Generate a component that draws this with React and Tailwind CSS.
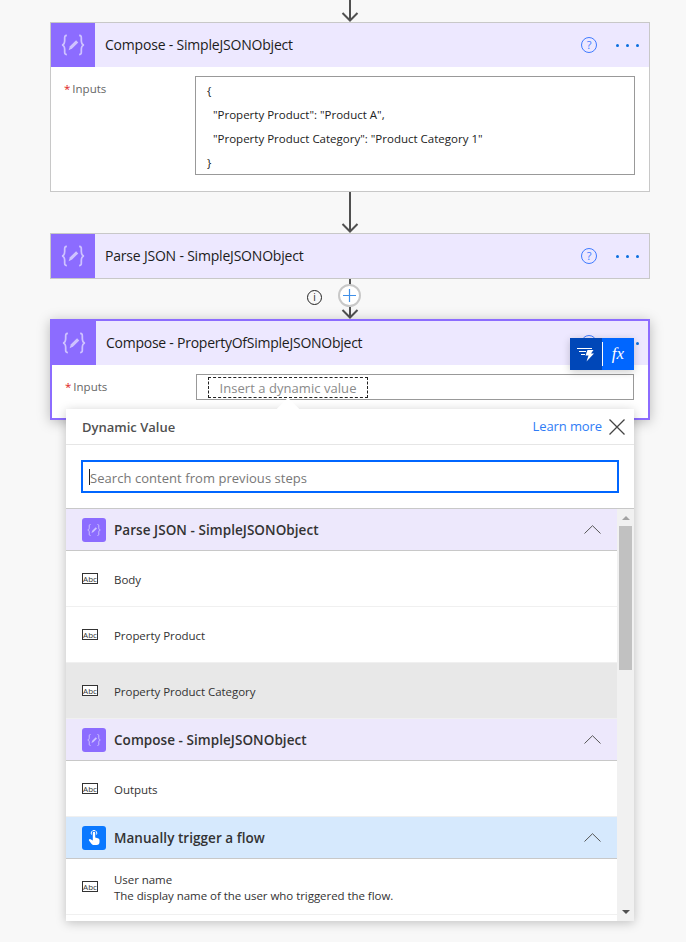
const font = "font-['Open_Sans','Noto_Sans',sans-serif]";

const BraceIcon = ({ className }) => (
  <svg viewBox="0 0 32 32" className={className} fill="none" stroke="currentColor" strokeWidth="2">
    <path d="M9 5C6 5 6.500 7 6.500 10.500C6.500 14 6 15.500 3.500 16C6 16.500 6.500 18 6.500 21.500C6.500 25 6 27 9 27" />
    <path d="M23 5C26 5 25.500 7 25.500 10.500C25.500 14 26 15.500 28.500 16C26 16.500 25.500 18 25.500 21.500C25.500 25 26 27 23 27" />
    <path d="M11 22L12.500 17.500L19.500 10.500L22 13L15 20Z" fill="currentColor" stroke="none" />
  </svg>
);

const Arrow = ({ h }) => (
  <svg width="20" height={h} viewBox={`0 0 20 ${h}`} fill="none" stroke="#505050" strokeWidth="2" className="block">
    <path d={`M10 0V${h - 1}M2.500 ${h - 9}L10 ${h - 1.500}L17.500 ${h - 9}`} />
  </svg>
);

const Help = () => (
  <div className="w-[16px] h-[16px] rounded-full border border-[#3f7bff] text-[#3f7bff] text-[11px] leading-[14px] text-center">?</div>
);

const Dots = () => (
  <div className="flex gap-[7px] ml-[19px]">
    <span className="w-[3px] h-[3px] rounded-full bg-[#0a6fe0]"></span>
    <span className="w-[3px] h-[3px] rounded-full bg-[#0a6fe0]"></span>
    <span className="w-[3px] h-[3px] rounded-full bg-[#0a6fe0]"></span>
  </div>
);

const CardHeader = ({ title }) => (
  <div className="flex items-center h-[44px] bg-[#ede8ff]">
    <div className="w-[44px] h-[44px] bg-[#8c6cff] flex items-center justify-center shrink-0">
      <BraceIcon className="w-[28px] h-[28px] text-[#cfc3ff]" />
    </div>
    <div className="ml-[10px] pb-[2px] text-[14px] text-[#1c1c1c] tracking-[-0.2px] flex-1">{title}</div>
    <Help />
    <Dots />
    <div className="w-[10px]"></div>
  </div>
);

const Abc = () => (
  <div className="w-[16px] h-[11px] border border-[#333] text-[8px] leading-[9px] text-center text-[#333] bg-white">Abc</div>
);

const Chevron = () => (
  <svg width="17" height="9" viewBox="0 0 17 9" fill="none" stroke="#555" strokeWidth="1">
    <path d="M0.500 8.500L8.500 0.700L16.500 8.500" />
  </svg>
);

const SectionHeader = ({ title, blue }) => (
  <div className={`flex items-center h-[42px] pl-[16px] pr-[16px] border-b border-[#c8c8c8] ${blue ? "bg-[#d6e9fd]" : "bg-[#ede8fc]"}`}>
    <div className={`w-[24px] h-[24px] rounded-[3px] flex items-center justify-center ${blue ? "bg-[#0a78ff]" : "bg-[#8c6cff]"}`}>
      {blue ? (
        <svg viewBox="0 0 16 16" className="w-[16px] h-[16px]" fill="white">
          <path d="M6.800 3a1.200 1.200 0 0 1 2.400 0V7.500l2.600.8c1 .4 1.700 1 1.700 2v1.700c0 2-1 3-3 3H8c-1.500 0-2.200-.6-3-1.800l-2-2.800c-.5-.8.500-1.800 1.500-1.200l2.300 1.300Z" />
          <path d="M5.500 4.500a2.800 2.800 0 1 1 5 0" fill="none" stroke="white" strokeWidth="1" />
        </svg>
      ) : (
        <BraceIcon className="w-[16px] h-[16px] text-[#cfc3ff]" />
      )}
    </div>
    <div className="ml-[8px] pt-[1px] flex-1 text-[13.500px] font-semibold text-[#333] tracking-[0.05px]">{title}</div>
    <Chevron />
  </div>
);

const Row = ({ label, sub, active }) => (
  <div className={`flex items-center h-[56px] pl-[16px] border-b border-[#f0f0f0] ${active ? "bg-[#e8e8e8]" : "bg-white"}`}>
    <Abc />
    <div className="ml-[16px] pt-[3px] text-[11.500px] leading-[16px] text-[#333] tracking-[-0.05px]">
      <div>{label}</div>
      {sub && <div>{sub}</div>}
    </div>
  </div>
);

const DynamicPanel = () => (
  <div className="absolute left-[14px] top-[88px] w-[568px] h-[512px] bg-white shadow-[0_2px_10px_rgba(0,0,0,0.22)] flex flex-col">
    <div className="absolute left-[214px] top-[-8px] w-[16px] h-[16px] bg-white rotate-45"></div>
    <div className="relative flex items-center h-[36px] pl-[16px] pr-[8px] border-b border-[#e6e6e6]">
      <div className="flex-1 pt-[3px] text-[13px] font-semibold text-[#505050]">Dynamic Value</div>
      <div className="pt-[1px] text-[13px] text-[#2f7cf6] tracking-[-0.1px]">Learn more</div>
      <svg width="18" height="18" viewBox="0 0 18 18" fill="none" stroke="#444" strokeWidth="1.300" className="ml-[6px]">
        <path d="M1.500 1.500L16.500 16.500M16.500 1.500L1.500 16.500" />
      </svg>
    </div>
    <div className="h-[64px] pl-[15px] pr-[15px] pt-[15px] border-b border-[#c8c8c8]">
      <div className="h-[33px] border-2 border-[#0066ff] flex items-center pl-[6px] text-[13px] text-[#777] tracking-[0.05px]">
        <span className="w-[1px] h-[16px] bg-[#222]"></span>
        <span className="pt-[4px]">Search content from previous steps</span>
      </div>
    </div>
    <div className="flex flex-1 min-h-0">
      <div className="flex-1 overflow-hidden">
        <SectionHeader title="Parse JSON - SimpleJSONObject" />
        <Row label="Body" />
        <Row label="Property Product" />
        <Row label="Property Product Category" active />
        <SectionHeader title="Compose - SimpleJSONObject" />
        <Row label="Outputs" />
        <SectionHeader title="Manually trigger a flow" blue />
        <Row label="User name" sub="The display name of the user who triggered the flow." />
      </div>
      <div className="w-[17px] bg-[#f1f1f1] flex flex-col items-center pt-[7px] pb-[7px]">
        <div className="w-0 h-0 border-x-[4px] border-x-transparent border-b-[4px] border-b-[#a3a3a3]"></div>
        <div className="w-[13px] h-[144px] bg-[#c1c1c1] mt-[6px]"></div>
        <div className="flex-1"></div>
        <div className="w-0 h-0 border-x-[4px] border-x-transparent border-t-[4px] border-t-[#505050]"></div>
      </div>
    </div>
  </div>
);

const App = () => {
  return (
    <div className={`${font} w-[686px] h-[942px] overflow-hidden bg-[#f8f8f8] relative`}>
      <div className="w-[600px] ml-[50px] flex flex-col">
        <div className="h-[22px] flex justify-center"><Arrow h={22} /></div>

        <div className="border border-[#c8c8c8] bg-white h-[170px]">
          <CardHeader title="Compose - SimpleJSONObject" />
          <div className="flex pt-[9px]">
            <div className="w-[144px] pl-[13px] pt-[5px] text-[11.500px] text-[#666] leading-[16px]">
              <span className="text-[#e02020]">*</span><span className="ml-[2px]">Inputs</span>
            </div>
            <div className="w-[440px] h-[99px] border border-[#999] pl-[11px] pt-[2px] text-[11.500px] leading-[24px] text-[#222]">
              <div>{"{"}</div>
              <div className="pl-[6px]">"Property Product": "Product A",</div>
              <div className="pl-[6px]">"Property Product Category": "Product Category 1"</div>
              <div>{"}"}</div>
            </div>
          </div>
        </div>

        <div className="h-[41px] flex justify-center"><Arrow h={41} /></div>

        <div className="border border-[#c8c8c8] h-[46px] bg-[#ede8ff]">
          <CardHeader title="Parse JSON - SimpleJSONObject" />
        </div>

        <div className="h-[40px] relative flex justify-center">
          <div className="w-[2px] h-[8px] bg-[#505050]"></div>
          <div className="absolute left-[257px] top-[11px] w-[15px] h-[15px] rounded-full border border-[#222] text-[10px] leading-[13px] text-center text-[#222]">i</div>
          <div className="absolute left-[288px] top-[5px] w-[23px] h-[23px] rounded-full border-2 border-[#c8c8c8] bg-white flex items-center justify-center">
            <svg width="13" height="13" viewBox="0 0 13 13" stroke="#3f8fe8" strokeWidth="1.200"><path d="M6.500 0V13M0 6.500H13" /></svg>
          </div>
          <div className="absolute left-[290px] top-[28px]"><Arrow h={12} /></div>
        </div>

        <div className="relative border-2 border-[#8c6cff] bg-white h-[101px] shadow-[0_2px_12px_rgba(0,0,0,0.25)]">
          <div className="flex items-center h-[44px] bg-[#ede8ff]">
            <div className="w-[44px] h-[44px] bg-[#8c6cff] flex items-center justify-center shrink-0">
              <BraceIcon className="w-[28px] h-[28px] text-[#cfc3ff]" />
            </div>
            <div className="ml-[10px] pb-[2px] text-[14px] text-[#1c1c1c] tracking-[-0.25px] flex-1">Compose - PropertyOfSimpleJSONObject</div>
            <Help />
            <Dots />
            <div className="w-[9px]"></div>
          </div>
          <div className="flex pt-[9px]">
            <div className="w-[144px] pl-[13px] pt-[5px] text-[11.500px] text-[#666] leading-[16px]">
              <span className="text-[#e02020]">*</span><span className="ml-[2px]">Inputs</span>
            </div>
            <div className="w-[438px] h-[26px] border border-[#999] pl-[11px] pt-[2px] bg-white">
              <div className="w-[160px] h-[21px] border border-dashed border-[#222] text-[13px] leading-[21px] text-center text-[#8a8a8a] tracking-[0.05px]">Insert a dynamic value</div>
            </div>
          </div>
          <div className="absolute left-[518px] top-[17px] flex h-[32px] shadow-[0_2px_8px_rgba(0,0,0,0.2)]">
            <div className="w-[32px] bg-[#0047b8] flex items-center justify-center">
              <svg width="18" height="16" viewBox="0 0 18 16" fill="none" stroke="white" strokeWidth="1">
                <path d="M0 2.500H15M2 5.500H9M4 8.500H8" />
                <path d="M10.500 4H16.500L14 7.500H17L9.500 15.500L11.500 9.500H8.500Z" fill="white" stroke="none" />
              </svg>
            </div>
            <div className="w-[32px] bg-[#0066ff] flex items-center justify-center relative">
              <div className="absolute left-0 top-[4px] bottom-[4px] w-px bg-white"></div>
              <span className="font-['Liberation_Serif',serif] italic text-white text-[17px]">fx</span>
            </div>
          </div>
          <DynamicPanel />
        </div>
      </div>
    </div>
  );
};

export default App;
